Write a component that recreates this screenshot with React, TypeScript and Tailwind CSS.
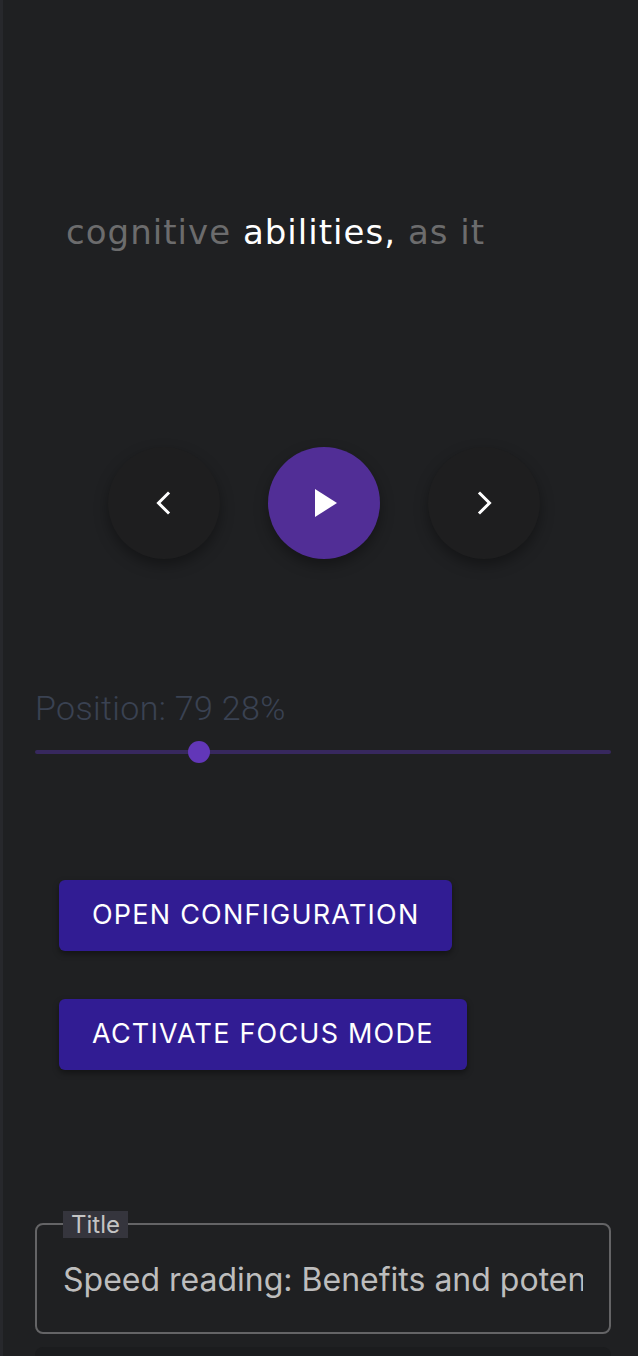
import React from "react";

const ChevronLeft = () => (
  <svg width="24" height="24" viewBox="0 0 24 24" fill="none">
    <path d="M16 2.5l-9.5 9.5 9.5 9.5" stroke="white" strokeWidth="3" strokeLinecap="square" />
  </svg>
);

const ChevronRight = () => (
  <svg width="24" height="24" viewBox="0 0 24 24" fill="none">
    <path d="M8 2.5l9.5 9.5-9.5 9.5" stroke="white" strokeWidth="3" strokeLinecap="square" />
  </svg>
);

const Play = () => (
  <svg width="24" height="30" viewBox="0 0 24 30">
    <path d="M1 1l22 14-22 14z" fill="white" />
  </svg>
);

const App = () => {
  const position = 28;
  return (
    <div className="min-h-screen w-full bg-[#1f2022] border-l-[3px] border-[#27282c] overflow-hidden">
      {/* word display */}
      <div
        className="mt-[212px] h-[40px] pl-[63px] text-[34px] leading-[40px] whitespace-nowrap tracking-[0.03em]"
        style={{ fontFamily: "'DejaVu Sans', 'Noto Sans', sans-serif" }}
      >
        <span className="text-[#6c6c6d]">cognitive </span>
        <span className="text-white font-medium">abilities,</span>
        <span className="text-[#6c6c6d]"> as it</span>
      </div>

      {/* controls */}
      <div className="mt-[195px] flex gap-[48px] pl-[105px]">
        <button className="w-[112px] h-[112px] rounded-full bg-[#1e1e1f] shadow-[0_6px_14px_rgba(0,0,0,0.35)] flex items-center justify-center">
          <ChevronLeft />
        </button>
        <button className="w-[112px] h-[112px] rounded-full bg-[#512e96] shadow-[0_6px_14px_rgba(0,0,0,0.35)] flex items-center justify-center pl-[4px]">
          <Play />
        </button>
        <button className="w-[112px] h-[112px] rounded-full bg-[#1e1e1f] shadow-[0_6px_14px_rgba(0,0,0,0.35)] flex items-center justify-center">
          <ChevronRight />
        </button>
      </div>

      {/* position */}
      <div className="mt-[129px] pl-[32px] pr-[27px]">
        <div
          className="text-[34px] leading-[40px] font-light tracking-[0.01em] text-[#3a4252]"
          style={{ fontFamily: "Roboto, sans-serif" }}
        >
          Position: 79 {position}%
        </div>
        <div className="relative mt-[14px] h-[20px]">
          <div className="absolute left-0 right-0 top-[8px] h-[4px] rounded-full bg-[#37285e]" />
          <div
            className="absolute -top-[1px] w-[22px] h-[22px] -ml-[11px] rounded-full bg-[#6237b8]"
            style={{ left: `${position + 0.5}%` }}
          />
        </div>
      </div>

      {/* actions */}
      <div
        className="mt-[118px] pl-[56px] flex flex-col items-start gap-[48px]"
        style={{ fontFamily: "Inter, sans-serif" }}
      >
        <button className="h-[71px] px-[33px] rounded-[6px] bg-[#311c93] text-white text-[27px] tracking-[0.045em] shadow-[0_3px_6px_rgba(0,0,0,0.4)]">
          OPEN CONFIGURATION
        </button>
        <button className="h-[71px] px-[33px] rounded-[6px] bg-[#311c93] text-white text-[27px] tracking-[0.045em] shadow-[0_3px_6px_rgba(0,0,0,0.4)]">
          ACTIVATE FOCUS MODE
        </button>
      </div>

      {/* title input */}
      <div className="mt-[153px] pl-[32px] pr-[27px]" style={{ fontFamily: "Inter, sans-serif" }}>
        <div className="relative h-[111px] rounded-[8px] border-2 border-[#646466]">
          <span className="absolute -top-[14px] left-[26px] px-[8px] h-[27px] leading-[27px] bg-[#35353d] text-[24px] text-[#c4c4c4]">
            Title
          </span>
          <div className="absolute left-[26px] right-[26px] top-[35px] overflow-hidden whitespace-nowrap text-[32px] leading-[40px] text-[#bdbdbd]">
            Speed reading: Benefits and potential drawbacks
          </div>
        </div>
        <div className="mt-[13px] h-[40px] rounded-t-[8px] bg-[#1b1c1e]" />
      </div>
    </div>
  );
};

export default App;
